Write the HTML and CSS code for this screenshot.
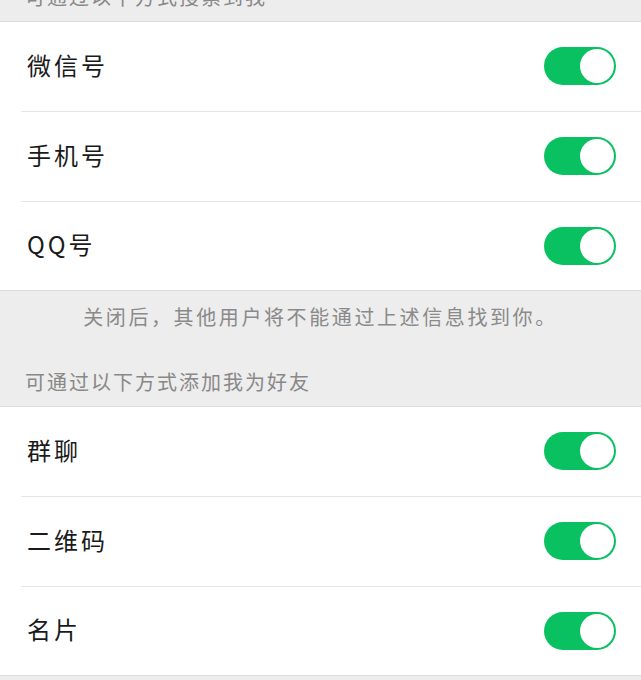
FILE: index.html
```html
<!DOCTYPE html>
<html lang="zh-CN">
<head>
    <meta charset="UTF-8">
    <meta name="viewport" content="width=device-width, initial-scale=1.0">
    <title>添加我的方式</title>
    <link rel="stylesheet" href="styles.css">
</head>
<body>
    <div class="page">
        <div class="section-title">可通过以下方式搜索到我</div>
        <div class="group">
            <div class="row">
                <span class="label">微信号</span>
                <span class="switch on"><span class="knob"></span></span>
            </div>
            <div class="row">
                <span class="label">手机号</span>
                <span class="switch on"><span class="knob"></span></span>
            </div>
            <div class="row">
                <span class="label">QQ号</span>
                <span class="switch on"><span class="knob"></span></span>
            </div>
        </div>
        <div class="section-tip">关闭后，其他用户将不能通过上述信息找到你。</div>

        <div class="section-title">可通过以下方式添加我为好友</div>
        <div class="group">
            <div class="row">
                <span class="label">群聊</span>
                <span class="switch on"><span class="knob"></span></span>
            </div>
            <div class="row">
                <span class="label">二维码</span>
                <span class="switch on"><span class="knob"></span></span>
            </div>
            <div class="row">
                <span class="label">名片</span>
                <span class="switch on"><span class="knob"></span></span>
            </div>
        </div>
    </div>
</body>
</html>
```

FILE: styles.css
```css
body {
    margin: 0;
    padding: 0;
    background-color: #ededed;
    font-family: "Noto Sans CJK SC", "Noto Sans", sans-serif;
}
.page {
    margin-top: -36px;
}
.section-title {
    padding: 21px 25px 12px;
    font-size: 20px;
    line-height: 24px;
    letter-spacing: 2px;
    color: #888;
}
.section-tip {
    padding: 14px 20px 20px;
    font-size: 20px;
    line-height: 24px;
    letter-spacing: 2.6px;
    color: #8a8a8a;
    text-align: center;
}
.section-tip + .section-title {
    padding-top: 21px;
}
.group {
    background-color: #fff;
    border-top: 1px solid #dcdcdc;
    border-bottom: 1px solid #dcdcdc;
    padding-left: 21px;
}
.row {
    height: 89px;
    display: flex;
    align-items: center;
    justify-content: space-between;
    padding-right: 25px;
    border-bottom: 1px solid #e6e6e6;
}
.row:last-child {
    height: 88px;
    border-bottom: none;
}
.label {
    margin-left: 6px;
    margin-bottom: 5px;
    font-size: 24px;
    letter-spacing: 3px;
    color: #1a1a1a;
}
.switch {
    width: 72px;
    height: 38px;
    margin-bottom: 1px;
    border-radius: 19px;
    background-color: #09c160;
    display: flex;
    align-items: center;
    padding: 0 2px;
    box-sizing: border-box;
}
.switch.on {
    justify-content: flex-end;
}
.knob {
    width: 34px;
    height: 34px;
    border-radius: 50%;
    background-color: #fff;
}
```
